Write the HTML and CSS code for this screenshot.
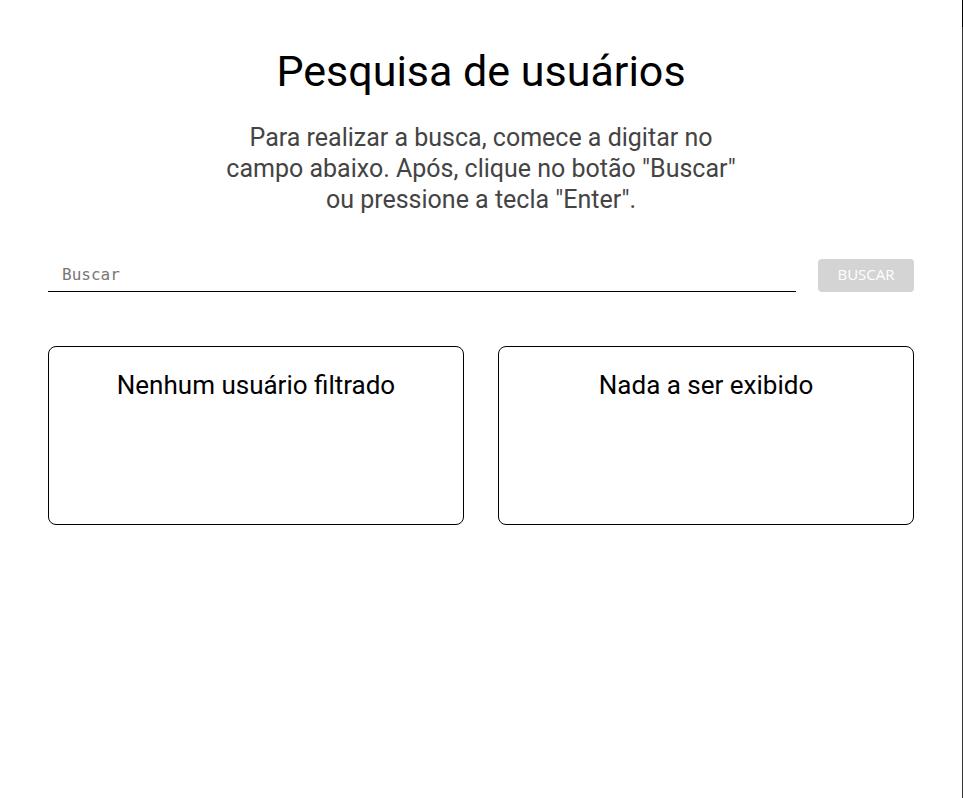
FILE: index.html
```html
<!DOCTYPE html>
<html lang="pt-BR">
<head>
<meta charset="utf-8">
<title>Pesquisa de usuários</title>
<link rel="stylesheet" href="styles.css">
</head>
<body>
<div class="edge"></div>
<main class="page">
  <h1 class="title">Pesquisa de usuários</h1>
  <p class="subtitle">Para realizar a busca, comece a digitar no<br>campo abaixo. Após, clique no botão "Buscar"<br>ou pressione a tecla "Enter".</p>
  <div class="search">
    <input class="search-input" type="text" placeholder="Buscar">
    <button class="search-btn" type="button" disabled>BUSCAR</button>
  </div>
  <div class="cards">
    <section class="card"><h2 class="card-title">Nenhum usuário filtrado</h2></section>
    <section class="card"><h2 class="card-title">Nada a ser exibido</h2></section>
  </div>
</main>
</body>
</html>
```
FILE: styles.css
```css
html, body {
  margin: 0;
  padding: 0;
  background: #fff;
}
body {
  font-family: Roboto, "Liberation Sans", sans-serif;
  color: #000;
}
.edge {
  position: fixed;
  top: 0;
  right: 0;
  width: 1px;
  height: 100%;
  background: linear-gradient(#000 0, #000 27px, #333 27px, #333 100%);
}
.page {
  padding: 0 49px 0 48px;
}
.title {
  margin: 46px 0 0;
  font-size: 43px;
  font-weight: 400;
  line-height: 50px;
  text-align: center;
}
.subtitle {
  margin: 26px 0 0;
  font-size: 25px;
  line-height: 31px;
  color: #444;
  text-align: center;
}
.search {
  margin-top: 44px;
  display: flex;
  align-items: stretch;
  gap: 22px;
  height: 33px;
}
.search-input {
  flex: 1;
  box-sizing: border-box;
  height: 33px;
  margin: 0;
  padding: 0 14px 2px;
  border: 0;
  border-bottom: 1px solid #000;
  outline: none;
  background: transparent;
  font-family: "DejaVu Sans Mono", monospace;
  font-size: 16px;
  color: #000;
}
.search-input::placeholder {
  color: #777;
}
.search-btn {
  box-sizing: border-box;
  width: 96px;
  height: 33px;
  margin: 0;
  padding: 0 0 4px;
  border: 0;
  border-radius: 4px;
  background: #d4d4d4;
  color: #fff;
  font-family: "Open Sans", sans-serif;
  font-size: 15px;
  letter-spacing: 0;
}
.cards {
  margin-top: 54px;
  display: grid;
  grid-template-columns: 1fr 1fr;
  gap: 34px;
}
.card {
  box-sizing: border-box;
  height: 179px;
  border: 1px solid #000;
  border-radius: 8px;
  padding-top: 23px;
}
.card-title {
  margin: 0;
  font-size: 26px;
  font-weight: 400;
  line-height: 30px;
  text-align: center;
}
```
